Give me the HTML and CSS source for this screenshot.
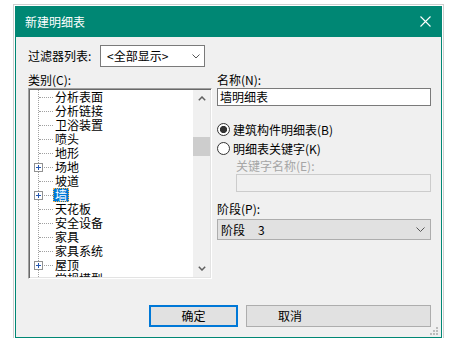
FILE: index.html
```html
<!DOCTYPE html>
<html lang="zh-CN">
<head>
<meta charset="utf-8">
<title>新建明细表</title>
<link rel="stylesheet" href="styles.css">
</head>
<body>
<div class="window">
  <div class="titlebar">
    <span class="title">新建明细表</span>
    <svg class="close" width="11" height="11" viewBox="0 0 11 11"><path d="M0.5 0.5L10.5 10.5M10.5 0.5L0.5 10.5" stroke="#fff" stroke-width="1.1" fill="none"/></svg>
  </div>
  <div class="content">
    <div class="filter-row">
      <span class="filter-label">过滤器列表:</span>
      <div class="combo">
        <span>&lt;全部显示&gt;</span>
        <svg width="8" height="5" viewBox="0 0 8 5"><path d="M0.5 0.5L4 4L7.5 0.5" stroke="#555" fill="none"/></svg>
      </div>
    </div>
    <div class="columns">
      <div class="col-left">
        <div class="label">类别(C):</div>
        <div class="tree">
          <div class="tree-list">
            <div class="row"><span class="twig"></span><span class="txt">分析表面</span></div>
            <div class="row"><span class="twig"></span><span class="txt">分析链接</span></div>
            <div class="row"><span class="twig"></span><span class="txt">卫浴装置</span></div>
            <div class="row"><span class="twig"></span><span class="txt">喷头</span></div>
            <div class="row"><span class="twig"></span><span class="txt">地形</span></div>
            <div class="row"><span class="twig"><svg class="exp" width="9" height="9" viewBox="0 0 9 9"><rect x="0.5" y="0.5" width="8" height="8" fill="#fff" stroke="#919191"/><path d="M2 4.5H7M4.5 2V7" stroke="#2457b0"/></svg></span><span class="txt">场地</span></div>
            <div class="row"><span class="twig"></span><span class="txt">坡道</span></div>
            <div class="row"><span class="twig"><svg class="exp" width="9" height="9" viewBox="0 0 9 9"><rect x="0.5" y="0.5" width="8" height="8" fill="#fff" stroke="#919191"/><path d="M2 4.5H7M4.5 2V7" stroke="#2457b0"/></svg></span><span class="txt sel">墙</span></div>
            <div class="row"><span class="twig"></span><span class="txt">天花板</span></div>
            <div class="row"><span class="twig"></span><span class="txt">安全设备</span></div>
            <div class="row"><span class="twig"></span><span class="txt">家具</span></div>
            <div class="row"><span class="twig"></span><span class="txt">家具系统</span></div>
            <div class="row"><span class="twig"><svg class="exp" width="9" height="9" viewBox="0 0 9 9"><rect x="0.5" y="0.5" width="8" height="8" fill="#fff" stroke="#919191"/><path d="M2 4.5H7M4.5 2V7" stroke="#2457b0"/></svg></span><span class="txt">屋顶</span></div>
            <div class="row"><span class="twig"></span><span class="txt">常规模型</span></div>
          </div>
          <div class="vscroll">
            <div class="arrow"><svg width="8" height="5" viewBox="0 0 8 5"><path d="M0.8 4.2L4 1L7.2 4.2" stroke="#606060" stroke-width="1.5" fill="none"/></svg></div>
            <div class="track"><div class="thumb"></div></div>
            <div class="arrow"><svg width="8" height="5" viewBox="0 0 8 5"><path d="M0.8 0.8L4 4L7.2 0.8" stroke="#606060" stroke-width="1.5" fill="none"/></svg></div>
          </div>
        </div>
      </div>
      <div class="col-right">
        <div class="label">名称(N):</div>
        <div class="textbox">墙明细表</div>
        <div class="radios">
          <div class="radio-row"><span class="radio checked"></span><span>建筑构件明细表(B)</span></div>
          <div class="radio-row"><span class="radio"></span><span>明细表关键字(K)</span></div>
        </div>
        <div class="keyword">
          <div class="label-small disabled">关键字名称(E):</div>
          <div class="textbox off"></div>
        </div>
        <div class="label phase-label">阶段(P):</div>
        <div class="select">
          <span>阶段</span><span class="num">3</span>
          <svg class="sel-chev" width="9" height="5" viewBox="0 0 9 5"><path d="M0.5 0.5L4.5 4.5L8.5 0.5" stroke="#555" fill="none"/></svg>
        </div>
      </div>
    </div>
    <div class="footer">
      <button class="btn ok">确定</button>
      <button class="btn cancel">取消</button>
    </div>
    <svg class="grip" width="8" height="8" viewBox="0 0 8 8"><g fill="#bcbcbc"><rect x="6" y="0" width="2" height="2"/><rect x="3" y="3" width="2" height="2"/><rect x="6" y="3" width="2" height="2"/><rect x="0" y="6" width="2" height="2"/><rect x="3" y="6" width="2" height="2"/><rect x="6" y="6" width="2" height="2"/></g></svg>
  </div>
</div>
</body>
</html>
```
FILE: styles.css
```css
* { box-sizing: border-box; }
html, body { margin: 0; padding: 0; background: #fff; }
body {
  font-family: "Noto Sans CJK SC", "Microsoft YaHei", sans-serif;
  font-size: 12px;
  color: #000;
}
.window {
  margin: 6px 0 0 15px;
  width: 427px;
  height: 332px;
  border: 1px solid #008774;
  outline: 1px solid #cfcfcf;
  outline-offset: 1px;
  display: flex;
  flex-direction: column;
}
.titlebar {
  height: 30px;
  flex: none;
  background: #008774;
  display: flex;
  align-items: center;
  justify-content: space-between;
  padding: 0 10px 0 9px;
}
.title { color: #fff; line-height: 16px; }
.close { display: block; margin-top: -1px; }
.content {
  flex: 1;
  background: #f0f0f0;
  position: relative;
  padding: 8px 0 0 12px;
  display: flex;
  flex-direction: column;
}
.filter-row { display: flex; align-items: center; height: 22px; }
.filter-label { width: 72px; line-height: 16px; }
.combo {
  width: 105px;
  height: 22px;
  border: 1px solid #7a7a7a;
  background: #fff;
  display: flex;
  align-items: center;
  justify-content: space-between;
  padding: 0 4px 0 6px;
  line-height: 16px;
}
.columns { display: flex; gap: 5px; margin-top: 4px; }
.col-left { width: 184px; }
.col-right { width: 214px; }
.label { height: 17px; line-height: 17px; }
.tree {
  height: 191px;
  border: 1px solid;
  border-color: #a0a0a0 #fff #fff #a0a0a0;
  box-shadow: inset 1px 1px 0 #696969, inset -1px -1px 0 #e3e3e3;
  padding: 1px;
  display: flex;
}
.tree-list {
  flex: 1;
  background: #fff;
  overflow: hidden;
  position: relative;
}
.tree-list::before {
  content: "";
  position: absolute;
  left: 8px;
  top: 0;
  bottom: 0;
  border-left: 1px dotted #a0a0a0;
}
.row { display: flex; height: 14px; align-items: center; position: relative; }
.twig { width: 23px; height: 14px; position: relative; flex: none; }
.twig::after {
  content: "";
  position: absolute;
  left: 9px;
  top: 7px;
  width: 14px;
  border-top: 1px dotted #a0a0a0;
}
.exp { position: absolute; left: 4px; top: 3px; z-index: 1; display: block; }
.txt { height: 14px; line-height: 14px; padding: 0 2px; white-space: nowrap; }
.txt.sel {
  background: #0078d7;
  color: #fff;
  outline: 1px dotted #ffb347;
  outline-offset: -1px;
}
.vscroll {
  width: 17px;
  flex: none;
  background: #f0f0f0;
  display: flex;
  flex-direction: column;
}
.arrow { height: 17px; display: flex; align-items: center; justify-content: center; flex: none; }
.track { flex: 1; }
.thumb { margin-top: 30px; height: 19px; background: #cdcdcd; }
.textbox {
  height: 18px;
  border: 1px solid #7a7a7a;
  background: #fff;
  padding-left: 2px;
  line-height: 16px;
}
.textbox.off { border-color: #cccccc; background: #f0f0f0; }
.radios { margin-top: 14px; }
.radio-row { height: 19px; display: flex; align-items: center; }
.radio {
  width: 13px;
  height: 13px;
  border: 1px solid #333;
  border-radius: 50%;
  background: #fff;
  margin-right: 3px;
  flex: none;
}
.radio.checked { background: radial-gradient(circle, #333 0 3.3px, #fff 3.9px); }
.keyword { padding-left: 19px; }
.label-small { height: 16px; line-height: 16px; }
.disabled { color: #a6a6a6; }
.phase-label { margin-top: 8px; height: 18px; line-height: 18px; }
.select {
  margin-top: 1px;
  height: 21px;
  border: 1px solid #adadad;
  background: #e1e1e1;
  display: flex;
  align-items: center;
  padding: 0 5px 0 3px;
  line-height: 16px;
}
.select .num { margin-left: 13px; }
.sel-chev { margin-left: auto; display: block; }
.footer {
  margin-top: auto;
  display: flex;
  gap: 8px;
  padding: 0 0 10px 121px;
}
.btn {
  height: 22px;
  background: #e1e1e1;
  font-family: inherit;
  font-size: 12px;
  color: #000;
  padding: 0;
  line-height: 16px;
}
.btn.ok { width: 89px; border: 2px solid #0078d7; }
.btn.cancel { width: 185px; border: 1px solid #adadad; text-align: left; padding-left: 31px; }
.grip { position: absolute; right: 3px; bottom: 2px; display: block; }
```
